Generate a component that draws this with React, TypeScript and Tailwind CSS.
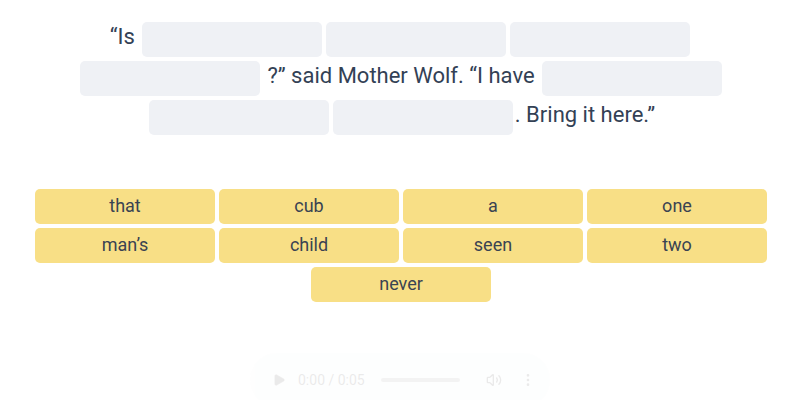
import { Play, Volume2, MoreVertical } from 'lucide-react'

const tiles = ['that', 'cub', 'a', 'one', 'man’s', 'child', 'seen', 'two', 'never']

function Blank() {
  return (
    <span className="mx-[2px] my-[2px] inline-block h-[35px] w-[180px] rounded-[5px] bg-[#eff1f5] align-top" />
  )
}

function Sentence() {
  return (
    <p className="mx-auto w-[722px] pl-[2px] pt-5 text-center text-[22px] leading-[33px] text-[#334155]">
      “Is <Blank />
      <Blank />
      <Blank />
      <Blank /> ?” said Mother Wolf. “I have <Blank />
      <Blank />
      <Blank />. Bring it here.”
    </p>
  )
}

function WordBank() {
  return (
    <div className="mx-auto mt-[52px] flex w-[734px] flex-wrap justify-center gap-1 pl-[2px]">
      {tiles.map((word) => (
        <button
          key={word}
          className="h-[35px] w-[180px] rounded-[5px] bg-[#f8df86] pb-[3px] text-[18px] text-[#3a4352]"
        >
          {word}
        </button>
      ))}
    </div>
  )
}

function AudioBar() {
  return (
    <div className="mx-auto mt-[51px] flex h-[54px] w-[300px] items-center rounded-full bg-[#f1f3f4] pl-[22px] opacity-[0.08]">
      <Play className="size-[14px] fill-black text-black" strokeWidth={1} />
      <span className="ml-[12px] text-[14px] text-black">0:00 / 0:05</span>
      <span className="ml-[16px] h-[4px] w-[79px] rounded-full bg-[#757575]" />
      <Volume2 className="ml-[26px] size-[16px] text-black" />
      <MoreVertical className="ml-[18px] size-[16px] text-black" />
    </div>
  )
}

export default function App() {
  return (
    <div className="h-[400px] w-[800px] overflow-hidden bg-white font-['Roboto',sans-serif]">
      <Sentence />
      <WordBank />
      <AudioBar />
    </div>
  )
}
